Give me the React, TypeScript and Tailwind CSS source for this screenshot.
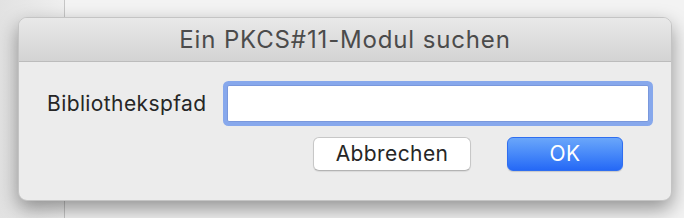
import React from 'react';

// macOS-style sheet: "Ein PKCS#11-Modul suchen"

const font = { fontFamily: 'Inter, "Liberation Sans", Arial, sans-serif' };

function DialogButton({ children, primary }: { children: React.ReactNode; primary?: boolean }) {
  return (
    <button
      type="button"
      className={
        primary
          ? 'h-[34px] w-[116px] rounded-[6px] border border-[#2f6ef0] bg-gradient-to-b from-[#6aa6fa] to-[#2568f6] text-[21px] tracking-[0.4px] text-white shadow-[0_1px_1px_rgba(0,0,0,0.15)]'
          : 'h-[34px] w-[158px] rounded-[6px] border border-[#c7c7c7] border-b-[#b3b3b3] bg-white text-[21px] tracking-[0.4px] text-[#262626] shadow-[0_1px_1px_rgba(0,0,0,0.08)]'
      }
    >
      {children}
    </button>
  );
}

export default function App() {
  return (
    <div className="relative h-[218px] w-[684px] overflow-hidden bg-[#f3f3f3]" style={font}>
      {/* window behind the sheet */}
      <div className="absolute inset-y-0 left-0 w-[65px] border-r border-[#c6c6c6] bg-gradient-to-r from-[#e2e2e2] to-[#efefef]" />

      <div className="absolute left-[18px] top-[17px] flex h-[184px] w-[654px] flex-col overflow-hidden rounded-[9px] border border-[#c4c4c4] bg-[#ececec] shadow-[0_8px_20px_rgba(0,0,0,0.4)]">
        <div className="flex h-[44px] shrink-0 items-center justify-center border-b border-[#bcbcbc] bg-gradient-to-b from-[#e9e9e9] to-[#d3d3d3] text-[24px] tracking-[0.85px] text-[#4b4b4b]">
          Ein PKCS#11-Modul suchen
        </div>

        <div className="flex flex-col pt-[23px] pl-[28px] pr-[22px]">
          <div className="flex items-center">
            <label className="w-[180px] text-[21px] tracking-[0.4px] text-[#262626]">Bibliothekspfad</label>
            <input
              type="text"
              className="h-[37px] w-[422px] rounded-[2px] border border-[#7a98dc] bg-white shadow-[0_0_0_4px_#87a8ec] outline-none"
            />
          </div>
          <div className="mt-[15px] flex justify-end gap-[36px] pr-[26px]">
            <DialogButton>Abbrechen</DialogButton>
            <DialogButton primary>OK</DialogButton>
          </div>
        </div>
      </div>
    </div>
  );
}
